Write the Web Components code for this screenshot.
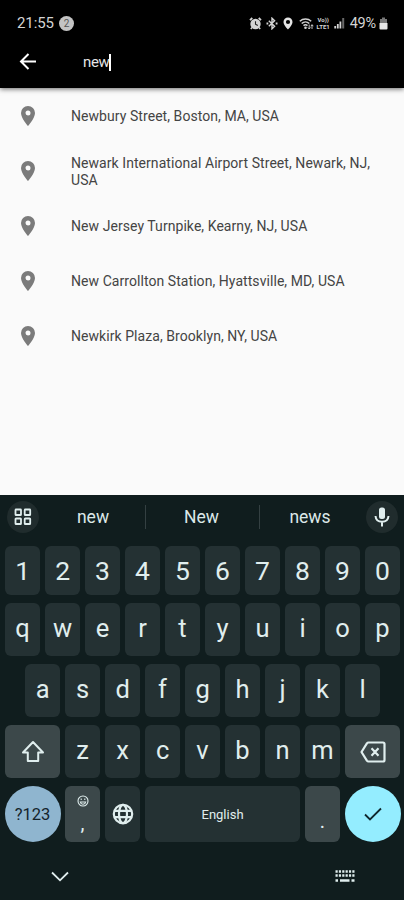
<!DOCTYPE html>
<html lang="en">
<head>
<meta charset="utf-8">
<meta name="viewport" content="width=device-width, initial-scale=1">
<title>Search address</title>
<style>
  body {
    margin: 0;
    background: #fafafa;
    font-family: Roboto, "Liberation Sans", sans-serif;
  }
</style>
</head>
<body>
<place-search>
  <status-bar slot="top"></status-bar>
  <search-bar slot="top">new</search-bar>
  <place-item>Newbury Street, Boston, MA, USA</place-item>
  <place-item>Newark International Airport Street, Newark, NJ, USA</place-item>
  <place-item>New Jersey Turnpike, Kearny, NJ, USA</place-item>
  <place-item>New Carrollton Station, Hyattsville, MD, USA</place-item>
  <place-item>Newkirk Plaza, Brooklyn, NY, USA</place-item>
  <soft-keyboard slot="bottom"></soft-keyboard>
</place-search>

<script>
class PlaceSearch extends HTMLElement {
  constructor() {
    super();
    this.attachShadow({ mode: "open" });
  }

  connectedCallback() {
    this.shadowRoot.innerHTML = `
      <style>
        :host {
          display: flex;
          flex-direction: column;
          height: 900px;
          overflow: hidden;
        }
        header {
          height: 88px;
          background: #000;
          box-shadow: 0 1px 5px rgba(0, 0, 0, 0.6);
        }
        main {
          flex: 1;
        }
      </style>
      <header><slot name="top"></slot></header>
      <main><slot></slot></main>
      <slot name="bottom"></slot>
    `;
  }
}

class StatusBar extends HTMLElement {
  constructor() {
    super();
    this.attachShadow({ mode: "open" });
  }

  connectedCallback() {
    this.shadowRoot.innerHTML = `
      <style>
        :host {
          display: flex;
          align-items: center;
          height: 36px;
          padding: 10px 16px 0 17px;
          box-sizing: border-box;
          color: #d4d4d4;
          font-size: 15px;
        }
        .time {
          width: 37px;
          letter-spacing: -0.1px;
        }
        .count {
          width: 15px;
          height: 15px;
          margin-left: 5px;
          border-radius: 50%;
          background: #c4c4c4;
          color: #555;
          font-size: 10px;
          line-height: 15px;
          text-align: center;
        }
        .icons {
          display: flex;
          align-items: center;
          margin-left: auto;
        }
        svg {
          display: block;
          fill: none;
          stroke: #d4d4d4;
        }
        .volte {
          width: 15px;
          margin-right: 3px;
          font-size: 6px;
          font-weight: bold;
          line-height: 7px;
          text-align: center;
        }
        .volte span {
          display: block;
        }
        .level {
          margin: 0 0 0 5px;
          font-size: 14.5px;
          letter-spacing: -0.2px;
        }
      </style>
      <span class="time">21:55</span>
      <span class="count">2</span>
      <div class="icons">
        <svg width="13" height="13" viewBox="0 0 13 13" style="margin-right: 4px">
          <path d="M1 3.2 3.3 1M12 3.2 9.7 1" stroke-width="1.8"/>
          <circle cx="6.5" cy="7" r="5.2" fill="#d4d4d4" stroke="none"/>
          <path d="M6.5 4.2V7.2L8.8 8.4" stroke="#222" stroke-width="1.1"/>
          <path d="M3 10.5 1.8 12M10 10.5l1.2 1.5" stroke-width="1.5"/>
        </svg>
        <svg width="12" height="13" viewBox="0 0 12 13" style="margin-right: 5px">
          <path d="M2.8 3.7 8.6 9.3 6 11.8V1.2l2.6 2.5-5.8 5.6" stroke-width="1.4"/>
          <path d="M.5 6.5h1.8M9.7 6.5h1.8" stroke-width="1.8"/>
        </svg>
        <svg width="10" height="13" viewBox="0 0 10 13" style="margin-right: 6px">
          <path fill="#e4e4e4" stroke="none" fill-rule="evenodd" d="M5 .5A4.5 4.5 0 0 0 .5 5C.5 8 5 12.5 5 12.5S9.5 8 9.5 5A4.5 4.5 0 0 0 5 .5ZM5 2.9a2.1 2.1 0 1 1 0 4.2 2.1 2.1 0 0 1 0-4.2Z"/>
        </svg>
        <svg width="15" height="13" viewBox="0 0 15 13" style="margin-right: 2px">
          <path d="M.8 4.3a8.5 8.5 0 0 1 11.4 0M2.7 6.5a5.6 5.6 0 0 1 7.6 0M4.5 8.6a3 3 0 0 1 4 0" stroke-width="1.5"/>
          <circle cx="6.5" cy="10.7" r="1.3" fill="#d4d4d4" stroke="none"/>
          <path d="M10.2 7.5v4.3M8.9 10.5l1.3 1.5 1.3-1.5M13 12V7.8M11.8 9.2 13 7.7l1.3 1.5" stroke-width=".9"/>
        </svg>
        <div class="volte"><span>Vo))</span><span>LTE1</span></div>
        <svg width="11" height="12" viewBox="0 0 11 12">
          <path d="M1.2 11.5V9M3.8 11.5V7M6.4 11.5V4.5" stroke-width="1.8"/>
          <path d="M9.2 11.5V1" stroke="#686868" stroke-width="2"/>
        </svg>
        <span class="level">49%</span>
        <svg width="9" height="13" viewBox="0 0 9 13" style="margin-left: 3px">
          <path d="M3 .5h3v1.5h2V6H1V2h2z" fill="#777" stroke="none"/>
          <path d="M.5 6h8v5.500a1 1 0 0 1-1 1h-6a1 1 0 0 1-1-1z" fill="#e6e6e6" stroke="none"/>
        </svg>
      </div>
    `;
  }
}

class SearchBar extends HTMLElement {
  constructor() {
    super();
    this.attachShadow({ mode: "open" });
  }

  connectedCallback() {
    this.shadowRoot.innerHTML = `
      <style>
        :host {
          display: flex;
          align-items: center;
          height: 52px;
          padding: 0 18px;
          color: #e6e6e6;
          font-size: 15px;
          letter-spacing: -0.4px;
        }
        svg {
          display: block;
          margin-right: 45px;
          fill: none;
          stroke: #fff;
          stroke-width: 2;
        }
        .caret {
          width: 1.5px;
          height: 17px;
          background: #fff;
        }
      </style>
      <svg width="20" height="20" viewBox="0 0 20 20"><path d="M18 9.5H3M10.5 2 3 9.5l7.5 7.5"/></svg>
      <slot></slot><span class="caret"></span>
    `;
  }
}

class PlaceItem extends HTMLElement {
  constructor() {
    super();
    this.attachShadow({ mode: "open" });
  }

  connectedCallback() {
    this.shadowRoot.innerHTML = `
      <style>
        :host {
          display: flex;
          align-items: center;
          height: 55px;
          padding: 0 24px 0 21px;
          color: #444;
          font-size: 14px;
          line-height: 17px;
          letter-spacing: 0.06px;
        }
        svg {
          flex: none;
          margin-right: 36px;
          fill: #7b7b7b;
        }
        span {
          padding-top: 2px;
        }
      </style>
      <svg width="14" height="20" viewBox="0 0 14 20">
        <path fill-rule="evenodd" d="M7 0a7 7 0 0 0-7 7c0 5.2 7 13 7 13s7-7.8 7-13a7 7 0 0 0-7-7Zm0 4.5a2.5 2.5 0 1 1 0 5 2.5 2.5 0 0 1 0-5Z"/>
      </svg>
      <span><slot></slot></span>
    `;
  }
}

// One key. type: "wide", "side", "space", "mode" or "enter"
class KeyCap extends HTMLElement {
  constructor() {
    super();
    this.attachShadow({ mode: "open" });
  }

  connectedCallback() {
    this.shadowRoot.innerHTML = `
      <style>
        :host {
          display: flex;
          flex: none;
          flex-direction: column;
          align-items: center;
          justify-content: center;
          width: 34.8px;
          height: 100%;
          padding-bottom: var(--lift, 4px);
          box-sizing: border-box;
          border-radius: 6px;
          background: #243133;
          color: #e0eeee;
          font-size: var(--key-size, 25.5px);
        }
        :host([type="wide"]) {
          width: 55px;
          padding-bottom: 0;
          background: #3c484a;
        }
        :host([type="side"]) {
          padding-bottom: 0;
          background: #3c484a;
        }
        :host([type="space"]) {
          flex: 1;
          padding-bottom: 0;
          font-size: 13px;
        }
        :host([type="mode"]),
        :host([type="enter"]) {
          width: 56px;
          margin: 0 -0.5px;
          padding-bottom: 0;
          border-radius: 50%;
          background: #8fb5cf;
          color: #14232b;
          font-size: 16.5px;
        }
        :host([type="enter"]) {
          background: #94edff;
        }
      </style>
      <slot></slot>
    `;
  }
}

class SoftKeyboard extends HTMLElement {
  constructor() {
    super();
    this.attachShadow({ mode: "open" });
  }

  keys(letters) {
    return [...letters].map((letter) => `<key-cap>${letter}</key-cap>`).join("");
  }

  connectedCallback() {
    this.shadowRoot.innerHTML = `
      <style>
        :host {
          display: block;
          height: 405px;
          background: #101d1e;
          color: #dce8e8;
        }
        svg {
          display: block;
          fill: none;
          stroke: #e0eeee;
        }
        .suggestions {
          display: grid;
          grid-template-columns: 32px 106px 1px 113px 1px 106px 32px;
          align-items: center;
          height: 44px;
          padding: 0 6px 0 7px;
          font-size: 17.5px;
          text-align: center;
        }
        .suggestions i {
          height: 24px;
          background: #344042;
        }
        .suggestions span:nth-child(2) {
          padding-left: 2px;
        }
        .suggestions span:nth-child(4) {
          padding-right: 2px;
        }
        .suggestions span:nth-child(6) {
          padding-right: 6px;
        }
        .round {
          display: grid;
          place-items: center;
          height: 32px;
          border-radius: 50%;
          background: #202c2d;
        }
        .rows {
          display: grid;
          grid-template-rows: 49px 53px 53px 53px 56px;
          row-gap: 8px;
          padding: 7px 4px 0 5px;
        }
        .row {
          display: flex;
          justify-content: center;
          gap: 5.2px;
          min-height: 0;
        }
        .row:first-child {
          --lift: 0px;
          --key-size: 26.5px;
        }
        .comma {
          height: 18px;
          font-size: 20px;
          line-height: 15px;
        }
        .dot {
          padding-top: 13px;
          font-size: 20px;
        }
        nav {
          display: flex;
          align-items: center;
          justify-content: space-between;
          height: 58px;
          padding: 10px 49px 0 51px;
          box-sizing: border-box;
        }
      </style>
      <div class="suggestions">
        <span class="round">
          <svg width="18" height="18" viewBox="0 0 18 18" stroke-width="1.8">
            <rect x="1.5" y="1.5" width="5.5" height="5.5" rx=".6"/><rect x="10.7" y="1.5" width="5.5" height="5.5" rx=".6"/>
            <rect x="1.5" y="10.5" width="5.5" height="5.5" rx=".6"/><rect x="10.7" y="10.5" width="5.5" height="5.5" rx=".6"/>
          </svg>
        </span>
        <span>new</span><i></i><span>New</span><i></i><span>news</span>
        <span class="round">
          <svg width="16" height="22" viewBox="0 0 16 22">
            <rect x="5" y="1.5" width="6" height="11.5" rx="2.5" fill="#e0eeee" stroke="none"/>
            <path d="M1.5 10c.3 3.7 3 5.8 6.5 5.8s6.2-2.1 6.5-5.8M8 15.8v4.7" stroke-width="2"/>
          </svg>
        </span>
      </div>
      <div class="rows">
        <div class="row">${this.keys("1234567890")}</div>
        <div class="row">${this.keys("qwertyuiop")}</div>
        <div class="row">${this.keys("asdfghjkl")}</div>
        <div class="row">
          <key-cap type="wide">
            <svg width="24" height="24" viewBox="0 0 24 24" stroke-width="2"><path d="M12 2 2 12.5h4.8V21h10.4v-8.5H22z" stroke-linejoin="round"/></svg>
          </key-cap>
          ${this.keys("zxcvbnm")}
          <key-cap type="wide">
            <svg width="26" height="22" viewBox="0 0 26 22" stroke-width="2.2"><path d="M8.5 1.5H23A1.5 1.5 0 0 1 24.500 3v16a1.500 1.500 0 0 1-1.500 1.500H8.500a2 2 0 0 1-1.600-.8L1.500 11l5.400-8.700a2 2 0 0 1 1.600-.8zM11.500 7.300l7 7.400M18.500 7.300l-7 7.400" stroke-linejoin="round"/></svg>
          </key-cap>
        </div>
        <div class="row">
          <key-cap type="mode">?123</key-cap>
          <key-cap type="side">
            <svg width="12" height="12" viewBox="0 0 12 12" stroke-width="1.1" style="margin-bottom: 9px">
              <circle cx="6" cy="6" r="5"/><path d="M3.3 7c.3 1.5 1.3 2.2 2.7 2.2S8.400 8.500 8.700 7zM4.200 3.500v1.500M7.800 3.500v1.500"/>
            </svg>
            <span class="comma">,</span>
          </key-cap>
          <key-cap style="--lift: 0px">
            <svg width="22" height="22" viewBox="0 0 22 22" stroke-width="2.2">
              <circle cx="11" cy="11" r="9.2"/><ellipse cx="11" cy="11" rx="4" ry="9.2"/><path d="M2.5 7.8h17M2.5 14.2h17"/>
            </svg>
          </key-cap>
          <key-cap type="space">English</key-cap>
          <key-cap type="side"><span class="dot">.</span></key-cap>
          <key-cap type="enter">
            <svg width="20" height="16" viewBox="0 0 20 16" style="stroke: #10272d" stroke-width="1.8"><path d="m2 8.5 5 5L18 2.5"/></svg>
          </key-cap>
        </div>
      </div>
      <nav>
        <svg width="18" height="11" viewBox="0 0 18 11" stroke-width="1.8"><path d="m1 1.5 8 7.8 8-7.8"/></svg>
        <svg width="20" height="14" viewBox="0 0 20 14" stroke-width="2.4">
          <path d="M.5 2.5h19M.5 6.5h19" stroke-dasharray="2.2 1.16"/><path d="M.5 11.5h2.5M5 11.5h9.5M16.5 11.5h3"/>
        </svg>
      </nav>
    `;
  }
}

customElements.define("status-bar", StatusBar);
customElements.define("search-bar", SearchBar);
customElements.define("place-item", PlaceItem);
customElements.define("key-cap", KeyCap);
customElements.define("soft-keyboard", SoftKeyboard);
customElements.define("place-search", PlaceSearch);
</script>
</body>
</html>
